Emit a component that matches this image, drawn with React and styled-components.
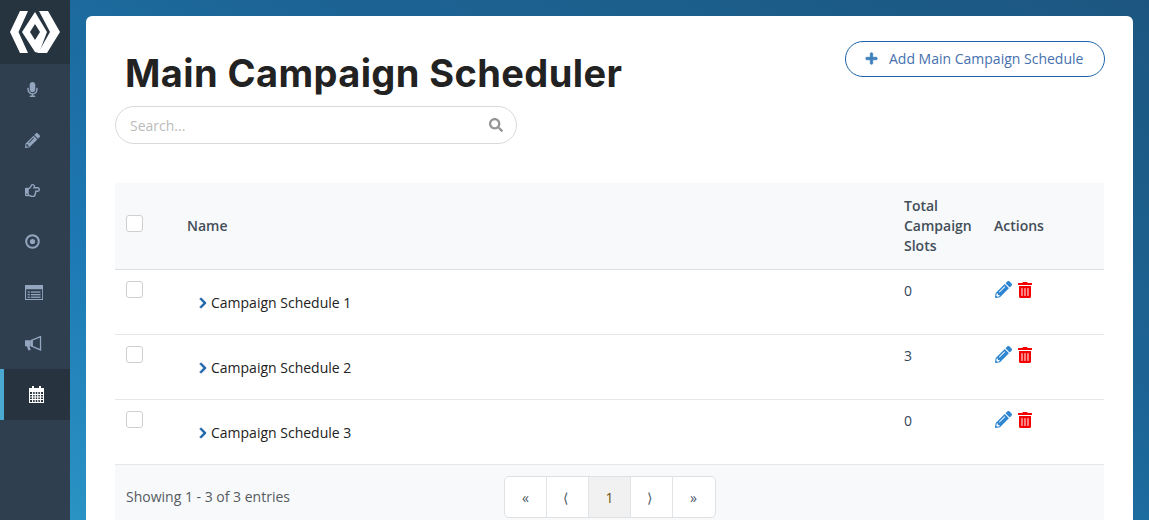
import React from "react";
import styled, { createGlobalStyle } from "styled-components";
import {
  FaMicrophone,
  FaPencilAlt,
  FaRegHandPointRight,
  FaPlus,
  FaSearch,
  FaChevronRight,
  FaTrashAlt,
} from "react-icons/fa";

const GlobalStyle = createGlobalStyle`
  html, body {
    margin: 0;
    height: 100%;
    overflow: hidden;
  }
  body {
    font-family: "Open Sans", "Liberation Sans", sans-serif;
    font-size: 14px;
  }
`;

const Page = styled.div`
  display: flex;
  height: 520px;
  overflow: hidden;
  background: linear-gradient(25deg, #2c96c6 0%, #1d78b3 30%, #1c6596 60%, #1c5680 100%);
`;

const Sidebar = styled.nav`
  flex: 0 0 70px;
  background: #2f3f4f;
`;

const LogoBox = styled.div`
  height: 64px;
  background: #26343f;
`;

const NavItem = styled.div`
  height: 50.8px;
  display: flex;
  align-items: center;
  box-sizing: border-box;
  padding-left: 25px;
  color: ${(p) => (p.$active ? "#ffffff" : "#93a5bf")};
  background: ${(p) => (p.$active ? "#27343f" : "transparent")};
  border-left: ${(p) => (p.$active ? "4px solid #4aa9d0" : "none")};
  svg {
    width: auto;
    height: 15px;
  }
`;

const Main = styled.main`
  flex: 1;
  padding: 16px 16px 0;
`;

const Card = styled.section`
  background: #ffffff;
  border-radius: 6px 6px 0 0;
  padding: 25px 28px 0 29px;
  height: 600px;
`;

const TopRow = styled.header`
  display: flex;
  justify-content: space-between;
  align-items: flex-start;
`;

const Title = styled.h1`
  margin: 8px 0 8px 10px;
  font-family: Inter, "Liberation Sans", sans-serif;
  font-weight: 700;
  font-size: 38px;
  line-height: 48px;
  letter-spacing: 0.4px;
  color: #222222;
`;

const AddButton = styled.button`
  width: 260px;
  height: 36px;
  display: flex;
  align-items: center;
  gap: 11px;
  padding: 0 0 2px 19px;
  border: 1px solid #1d62a8;
  border-radius: 18px;
  background: #ffffff;
  color: #4670ae;
  font-family: inherit;
  font-size: 14px;
  svg {
    font-size: 13px;
    color: #3f80bb;
    stroke: currentColor;
    stroke-width: 30;
  }
`;

const SearchBox = styled.div`
  width: 402px;
  height: 38px;
  box-sizing: border-box;
  margin-top: 1px;
  padding: 0 13px 0 14px;
  display: flex;
  align-items: center;
  justify-content: space-between;
  border: 1px solid #d9d9d9;
  border-radius: 19px;
  color: #bbbbbb;
  svg {
    color: #949494;
    font-size: 14px;
  }
`;

const Table = styled.table`
  width: 989px;
  margin-top: 39px;
  table-layout: fixed;
  border-collapse: collapse;
`;

const HeadCell = styled.th`
  background: #f8f9fa;
  padding: 13px 11px;
  height: 60px;
  line-height: 20px;
  text-align: left;
  font-weight: 600;
  color: #434e59;
  border-bottom: 1px solid #dcdfe2;
`;

const Cell = styled.td`
  height: 65px;
  box-sizing: border-box;
  padding: 11px 11px 11px;
  line-height: 20px;
  vertical-align: top;
  color: #33475b;
  border-bottom: 1px solid #e4e6e8;
`;

const Check = styled.span`
  display: block;
  width: 17px;
  height: 17px;
  box-sizing: border-box;
  border: 1px solid #cfcfcf;
  border-radius: 3px;
  background: #ffffff;
`;

const HeadCheck = styled(Check)`
  margin-top: -6px;
`;

const Name = styled.div`
  display: flex;
  align-items: center;
  gap: 2px;
  margin: 12px 0 0 10px;
  color: #222222;
  svg {
    font-size: 12px;
    color: #1c64a8;
    stroke: currentColor;
    stroke-width: 30;
  }
`;

const Actions = styled.div`
  display: flex;
  align-items: center;
  gap: 5px;
  margin-left: 1px;
  font-size: 17px;
`;

const EditIcon = styled(FaPencilAlt)`
  color: #2f86d0;
`;

const TrashIcon = styled(FaTrashAlt)`
  color: #f40000;
  font-size: 16px;
`;

const Footer = styled.footer`
  width: 989px;
  box-sizing: border-box;
  padding: 11px;
  height: 70px;
  display: flex;
  align-items: flex-start;
  background: #f8f9fa;
`;

const Info = styled.div`
  width: 378px;
  line-height: 42px;
  color: #555b61;
`;

const Pager = styled.ul`
  display: flex;
  margin: 0;
  padding: 0 1px 0 0;
  list-style: none;
  border: 1px solid #dfe1e3;
  border-radius: 5px;
  overflow: hidden;
  background: #ffffff;
`;

const PageCell = styled.li`
  width: ${(p) => (p.$nudge ? "37px" : "41px")};
  padding-right: ${(p) => (p.$nudge ? "4px" : "0")};
  height: 40px;
  display: flex;
  align-items: center;
  justify-content: center;
  color: ${(p) => (p.$current ? "#6f5210" : "#4c5a68")};
  font-weight: ${(p) => (p.$current ? 500 : 400)};
  background: ${(p) => (p.$current ? "#f1f1f1" : "transparent")};
  & + & {
    border-left: 1px solid #e2e4e6;
  }
`;

const Logo = () => (
  <svg width="70" height="64" viewBox="0 0 70 64" fill="#fff">
    <polygon points="20,11 28,11 18.5,32 28,53 20,53 10,32" />
    <polygon points="39,11 48,11 60,32 47,53 38,53 50,32" />
    <path
      fillRule="evenodd"
      d="M35 12 L47 32 L39 53 L35 52 L22 32 Z M35 24 L30 32 L35 40 L40 32 Z"
    />
  </svg>
);

const DotIcon = () => (
  <svg viewBox="0 0 15 15" fill="none" stroke="currentColor">
    <circle cx="7.5" cy="7.5" r="6.3" strokeWidth="2" />
    <circle cx="7.5" cy="7.5" r="2.6" fill="currentColor" strokeWidth="0" />
  </svg>
);

const NewsIcon = () => (
  <svg viewBox="0 0 17 14" fill="currentColor">
    <path fillRule="evenodd" d="M0 0 H17 V14 H0 Z M1 4 V13 H16 V4 Z" />
    <rect x="2.5" y="6" width="2" height="1.2" />
    <rect x="2.5" y="8.4" width="2" height="1.2" />
    <rect x="2.5" y="10.8" width="2" height="1.2" />
    <rect x="5.5" y="6" width="9" height="1.2" />
    <rect x="5.5" y="8.4" width="9" height="1.2" />
    <rect x="5.5" y="10.8" width="9" height="1.2" />
  </svg>
);

const HornIcon = () => (
  <svg viewBox="0 0 16 14" fill="currentColor">
    <path d="M0 4 H5 V9.5 H4.2 L5.4 13.4 H3 L1.8 9.5 H0 Z" />
    <path d="M6 4 L14.5 0.5 V13 L6 9.5 Z" fill="none" stroke="currentColor" strokeWidth="1.2" />
    <rect x="5" y="4" width="2.4" height="5.5" />
  </svg>
);

const CalendarSvg = styled.svg`
  && {
    height: 17px;
  }
`;

const CalendarIcon = () => (
  <CalendarSvg viewBox="0 0 15 17" fill="#fff">
    <rect x="3" y="0" width="2" height="3" />
    <rect x="10" y="0" width="2" height="3" />
    <path fillRule="evenodd" d="M0 2 H15 V17 H0 Z M1 6 V16 H14 V6 Z" />
    <path
      d="M3.6 6 V16 M6.2 6 V16 M8.8 6 V16 M11.4 6 V16 M1 8.5 H14 M1 11 H14 M1 13.5 H14"
      stroke="#fff"
      strokeWidth="1.1"
    />
  </CalendarSvg>
);

const navIcons = [
  FaMicrophone,
  FaPencilAlt,
  FaRegHandPointRight,
  DotIcon,
  NewsIcon,
  HornIcon,
];

const rows = [
  { name: "Campaign Schedule 1", slots: 0 },
  { name: "Campaign Schedule 2", slots: 3 },
  { name: "Campaign Schedule 3", slots: 0 },
];

const App = () => {
  return (
    <>
      <GlobalStyle />
      <Page>
        <Sidebar>
          <LogoBox>
            <Logo />
          </LogoBox>
          {navIcons.map((Icon, i) => (
            <NavItem key={i}>
              <Icon />
            </NavItem>
          ))}
          <NavItem $active>
            <CalendarIcon />
          </NavItem>
        </Sidebar>
        <Main>
          <Card>
            <TopRow>
              <Title>Main Campaign Scheduler</Title>
              <AddButton>
                <FaPlus />
                Add Main Campaign Schedule
              </AddButton>
            </TopRow>
            <SearchBox>
              Search...
              <FaSearch />
            </SearchBox>
            <Table>
              <colgroup>
                <col width="61" />
                <col width="717" />
                <col width="90" />
                <col width="121" />
              </colgroup>
              <thead>
                <tr>
                  <HeadCell>
                    <HeadCheck />
                  </HeadCell>
                  <HeadCell>Name</HeadCell>
                  <HeadCell>Total Campaign Slots</HeadCell>
                  <HeadCell>Actions</HeadCell>
                </tr>
              </thead>
              <tbody>
                {rows.map((row) => (
                  <tr key={row.name}>
                    <Cell>
                      <Check />
                    </Cell>
                    <Cell>
                      <Name>
                        <FaChevronRight />
                        {row.name}
                      </Name>
                    </Cell>
                    <Cell>{row.slots}</Cell>
                    <Cell>
                      <Actions>
                        <EditIcon />
                        <TrashIcon />
                      </Actions>
                    </Cell>
                  </tr>
                ))}
              </tbody>
            </Table>
            <Footer>
              <Info>Showing 1 - 3 of 3 entries</Info>
              <Pager>
                <PageCell>«</PageCell>
                <PageCell $nudge>⟨</PageCell>
                <PageCell $current>1</PageCell>
                <PageCell $nudge>⟩</PageCell>
                <PageCell>»</PageCell>
              </Pager>
            </Footer>
          </Card>
        </Main>
      </Page>
    </>
  );
};

export default App;
